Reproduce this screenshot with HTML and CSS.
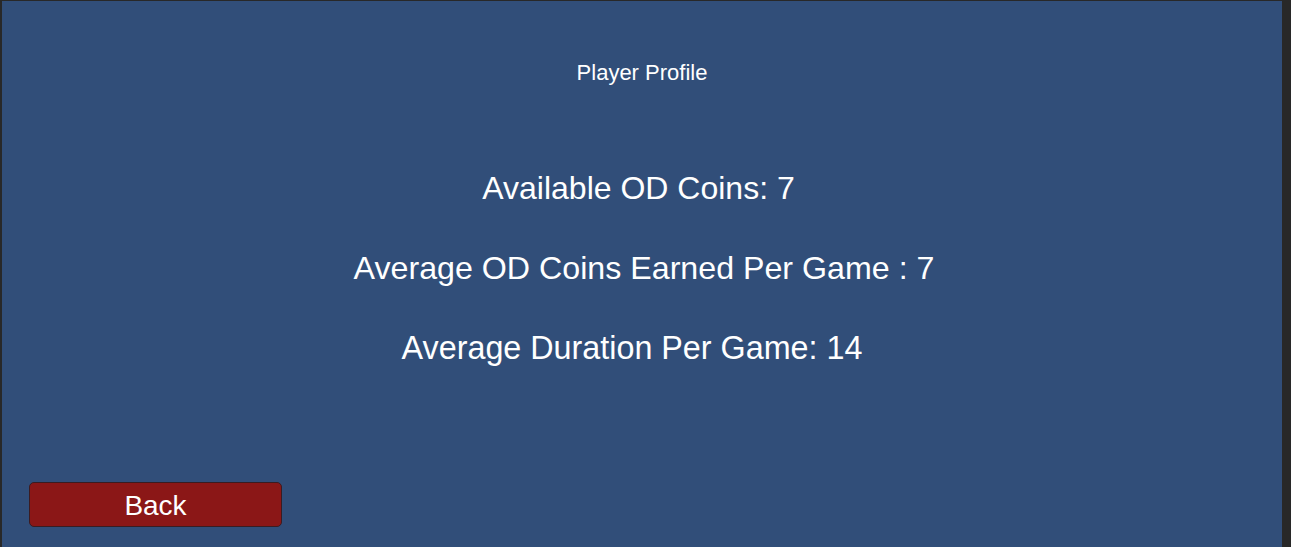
FILE: index.html
```html
<!DOCTYPE html>
<html>
<head>
<meta charset="utf-8">
<link rel="stylesheet" href="styles.css">
</head>
<body>
<div class="frame">
  <main class="panel">
    <h1 class="title">Player Profile</h1>
    <div class="stats">
      <p class="stat stat-a">Available OD Coins: 7</p>
      <p class="stat stat-b">Average OD Coins Earned Per Game : 7</p>
      <p class="stat stat-c">Average Duration Per Game: 14</p>
    </div>
    <div class="footer">
      <button class="back">Back</button>
    </div>
  </main>
</div>
</body>
</html>
```
FILE: styles.css
```css
html, body {
  margin: 0;
  padding: 0;
  height: 100%;
  background: #282828;
  font-family: "Liberation Sans", Arial, sans-serif;
}
.frame {
  height: 100%;
  box-sizing: border-box;
  padding: 1px 9px 0 2px;
  display: flex;
}
.panel {
  flex: 1;
  background: #314e79;
  display: flex;
  flex-direction: column;
  padding: 59px 0 20px 0;
  color: #ffffff;
}
.title {
  margin: 0;
  font-weight: normal;
  font-size: 22px;
  line-height: 26px;
  text-align: center;
}
.stats {
  margin-top: 62px;
  display: flex;
  flex-direction: column;
}
.stat {
  margin: 0;
  font-size: 32px;
  line-height: 80px;
  text-align: center;
}
.stat-a { padding-right: 7px; }
.stat-b { padding-left: 4px; font-size: 32.2px; }
.stat-c { padding-right: 20px; font-size: 32.3px; }
.footer {
  margin-top: auto;
  padding-left: 27px;
}
.back {
  width: 253px;
  height: 45px;
  background: #8b1717;
  border: 1px solid #3a1c22;
  border-radius: 5px;
  color: #ffffff;
  font-family: "Liberation Sans", Arial, sans-serif;
  font-size: 28px;
  line-height: 41px;
  padding: 2px 0 0 0;
  display: block;
  box-sizing: border-box;
}
```
